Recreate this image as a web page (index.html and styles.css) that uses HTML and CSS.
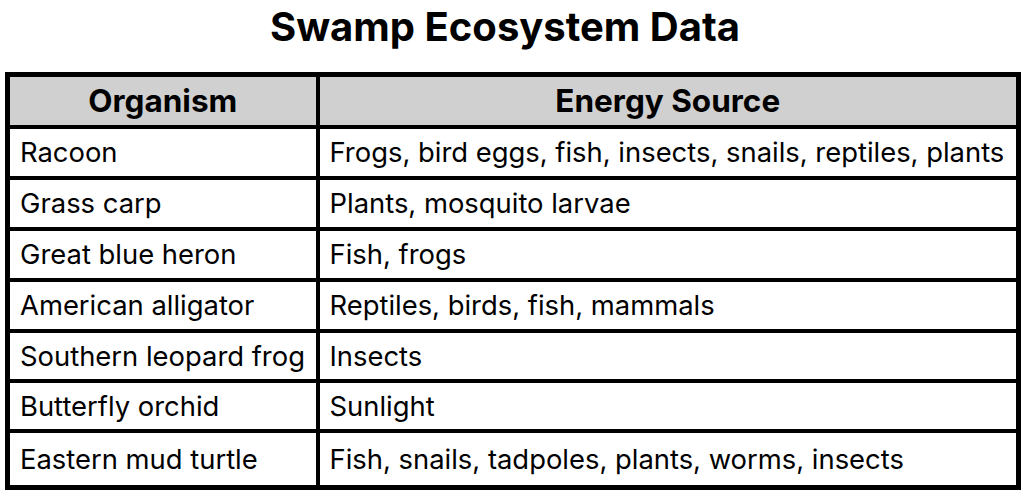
FILE: index.html
```html
<!DOCTYPE html>
<html>
<head>
<meta charset="utf-8">
<link rel="stylesheet" href="styles.css">
</head>
<body>
<div class="page">
  <h1 class="title">Swamp Ecosystem Data</h1>
  <table class="data">
    <thead>
      <tr><th class="c1">Organism</th><th class="c2">Energy Source</th></tr>
    </thead>
    <tbody>
      <tr><td>Racoon</td><td>Frogs, bird eggs, fish, insects, snails, reptiles, plants</td></tr>
      <tr><td>Grass carp</td><td>Plants, mosquito larvae</td></tr>
      <tr><td>Great blue heron</td><td>Fish, frogs</td></tr>
      <tr><td>American alligator</td><td>Reptiles, birds, fish, mammals</td></tr>
      <tr class="short"><td>Southern leopard frog</td><td>Insects</td></tr>
      <tr class="short"><td>Butterfly orchid</td><td>Sunlight</td></tr>
      <tr class="tall"><td>Eastern mud turtle</td><td>Fish, snails, tadpoles, plants, worms, insects</td></tr>
    </tbody>
  </table>
</div>
</body>
</html>
```
FILE: styles.css
```css
html, body {
  margin: 0;
  padding: 0;
  background: #ffffff;
}
.page {
  width: 1028px;
  height: 499px;
  padding: 0 0 0 5px;
  box-sizing: border-box;
  font-family: Inter, "Open Sans", sans-serif;
  color: #000;
}
.title {
  margin: 0;
  height: 72px;
  box-sizing: border-box;
  padding: 4px 16px 0 0;
  font-size: 40px;
  font-weight: 700;
  text-align: center;
  width: 1016px;
  line-height: 46px;
}
.data {
  border-collapse: collapse;
  width: 1016px;
  border: 5px solid #000;
}
.data th, .data td {
  border: 4px solid #000;
  padding: 0 0 0 10px;
  text-align: left;
  font-size: 27.4px;
  font-weight: 400;
  height: 51px;
  box-sizing: border-box;
  white-space: nowrap;
}
.data th {
  background: #d0d0d0;
  text-align: center;
  font-weight: 700;
  font-size: 31.5px;
  height: 52px;
  padding: 0;
}
.data .c1 { width: 310px; }
.data tr.short td { height: 50px; }
.data tr.tall td { height: 57px; }
```
